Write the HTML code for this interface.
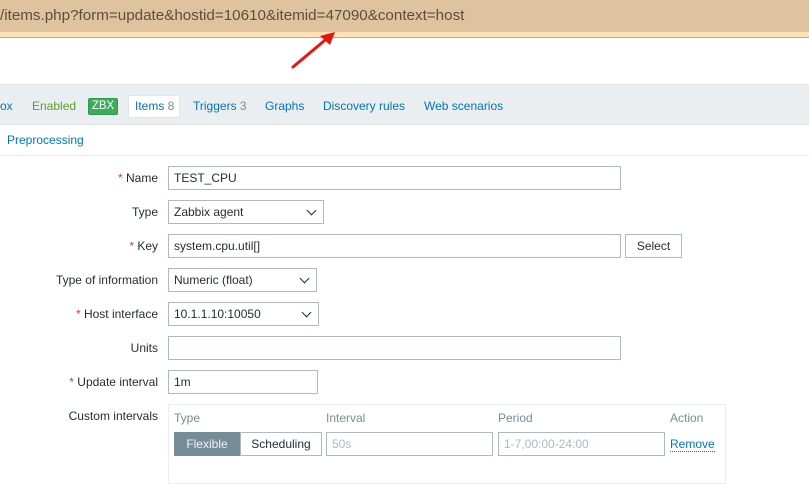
<!DOCTYPE html>
<html><head><style>
*{margin:0;padding:0;box-sizing:border-box}
body{width:809px;height:467px;overflow:hidden;background:#fff;font-family:"Liberation Sans",Arial,sans-serif;font-size:12px;color:#1f2c33;position:relative}
.a{position:absolute;white-space:nowrap}
.lbl{position:absolute;right:651px;text-align:right;font-size:12px;color:#1f2c33}
.lbl b{color:#e33734;font-weight:normal}
.in{position:absolute;height:24px;border:1px solid #acbbc2;background:#fff;padding:0 5px;line-height:22px;font-size:12px;color:#1f2c33}
.sel::after{content:"";position:absolute;right:8px;top:6px;width:6px;height:6px;border-right:1.3px solid #1f2c33;border-bottom:1.3px solid #1f2c33;transform:rotate(45deg)}
.lnk{color:#0275b8}
</style></head><body>
<div class="a" style="left:0;top:0;width:809px;height:32px;background:#dfc39e"></div>
<div class="a" style="left:0;top:32px;width:809px;height:6px;background:#fddfb8;border-bottom:1px solid #c8ab86"></div>
<div class="a" style="left:0;top:7px;font-size:15.2px;color:#5a4e40">/items.php?form=update&amp;hostid=10610&amp;itemid=47090&amp;context=host</div>
<svg class="a" style="left:288px;top:28px" width="50" height="44"><line x1="5" y1="39" x2="42" y2="8" stroke="#e8150f" stroke-width="3" stroke-linecap="round"/><polygon points="47,4 32,8 42,17" fill="#e8150f"/></svg>
<div class="a" style="left:0;top:84px;width:809px;height:41px;background:#ebeef0;border-top:1px solid #dfe4e7;border-bottom:1px solid #dfe4e7"></div>
<div class="a lnk" style="left:0;top:99px">ox</div>
<div class="a" style="left:32px;top:99px;color:#59a02b">Enabled</div>
<div class="a" style="left:88px;top:98px;width:30px;height:17px;background:#3cac5b;border:1px solid #2f9a4c;border-radius:2px;color:#fff;font-size:11.5px;line-height:15px;text-align:center">ZBX</div>
<div class="a" style="left:128px;top:95px;width:52px;height:23px;background:#fff;border:1px solid #dfe4e7;border-radius:2px"></div>
<div class="a lnk" style="left:135px;top:99px">Items <span style="color:#768d99">8</span></div>
<div class="a lnk" style="left:193px;top:99px">Triggers <span style="color:#768d99">3</span></div>
<div class="a lnk" style="left:265px;top:99px">Graphs</div>
<div class="a lnk" style="left:323px;top:99px">Discovery rules</div>
<div class="a lnk" style="left:424px;top:99px">Web scenarios</div>
<div class="a lnk" style="left:7px;top:133px">Preprocessing</div>
<div class="a" style="left:0;top:155px;width:809px;height:1px;background:#e6e9eb"></div>

<div class="lbl" style="top:171px"><b>*</b> Name</div>
<div class="in" style="left:168px;top:166px;width:453px">TEST_CPU</div>
<div class="lbl" style="top:205px">Type</div>
<div class="in sel" style="left:168px;top:200px;width:156px">Zabbix agent</div>
<div class="lbl" style="top:239px"><b>*</b> Key</div>
<div class="in" style="left:168px;top:234px;width:453px">system.cpu.util[]</div>
<div class="in" style="left:625px;top:234px;width:57px;text-align:center;border-color:#acbbc2">Select</div>
<div class="lbl" style="top:273px">Type of information</div>
<div class="in sel" style="left:168px;top:268px;width:149px">Numeric (float)</div>
<div class="lbl" style="top:307px"><b>*</b> Host interface</div>
<div class="in sel" style="left:168px;top:302px;width:151px">10.1.1.10:10050</div>
<div class="lbl" style="top:341px">Units</div>
<div class="in" style="left:168px;top:336px;width:453px"></div>
<div class="lbl" style="top:375px"><b>*</b> Update interval</div>
<div class="in" style="left:168px;top:370px;width:150px">1m</div>
<div class="lbl" style="top:409px">Custom intervals</div>
<div class="a" style="left:168px;top:404px;width:558px;height:80px;border:1px solid #ebeef0"></div>
<div class="a" style="left:174px;top:411px;color:#768d99">Type</div>
<div class="a" style="left:326px;top:411px;color:#768d99">Interval</div>
<div class="a" style="left:498px;top:411px;color:#768d99">Period</div>
<div class="a" style="left:670px;top:411px;color:#768d99">Action</div>
<div class="a" style="left:174px;top:432px;width:66px;height:24px;background:#768d99;color:#f0f3f4;line-height:24px;text-align:center">Flexible</div>
<div class="a" style="left:240px;top:432px;width:82px;height:24px;border:1px solid #acbbc2;line-height:22px;text-align:center">Scheduling</div>
<div class="in" style="left:326px;top:432px;width:167px;color:#acbbc2">50s</div>
<div class="in" style="left:498px;top:432px;width:167px;color:#acbbc2">1-7,00:00-24:00</div>
<div class="a lnk" style="left:670px;top:437px;border-bottom:1px dotted #0275b8;line-height:14px">Remove</div>
</body></html>
